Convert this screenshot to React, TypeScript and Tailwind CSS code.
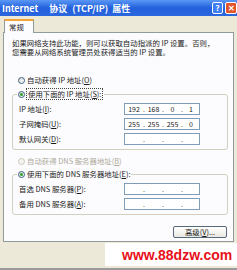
import React from "react";

const cjk = "font-['Noto_Sans_CJK_SC',sans-serif]";

function Radio({ checked, disabled }: { checked?: boolean; disabled?: boolean }) {
  return (
    <span
      className={`flex h-[7px] w-[7px] shrink-0 items-center justify-center rounded-full border ${
        disabled ? "border-[#cac8bb] bg-[#f4f3ee]" : "border-[#3b5f84] bg-linear-to-br from-[#d8d8d2] to-white"
      }`}
    >
      {checked && <span className="h-[3px] w-[3px] rounded-full bg-[#29a329]" />}
    </span>
  );
}

function IpBox({ parts }: { parts: string[] }) {
  const [a, b, c, d] = parts;
  return (
    <div className="grid h-[12px] w-[76px] grid-cols-[18px_2px_17px_2px_17px_2px_16px] items-center border border-[#7f9db9] bg-white text-[7px] leading-none text-[#222]">
      <span className="text-center">{a}</span>
      <span className="text-center text-[#555]">.</span>
      <span className="text-center">{b}</span>
      <span className="text-center text-[#555]">.</span>
      <span className="text-center">{c}</span>
      <span className="text-center text-[#555]">.</span>
      <span className="text-center">{d}</span>
    </div>
  );
}

function Field({ label, parts }: { label: React.ReactNode; parts: string[] }) {
  return (
    <div className="grid h-[12px] grid-cols-[105px_76px] items-center pl-[6px]">
      <span className="whitespace-nowrap">{label}</span>
      <IpBox parts={parts} />
    </div>
  );
}

export default function App() {
  return (
    <div className={`flex h-[270px] w-[237px] flex-col overflow-hidden bg-[#ece9d8] ${cjk} text-[7.4px] text-[#1a1a1a]`}>
      {/* title bar */}
      <div className="flex h-[16px] items-center bg-linear-to-b from-[#5a97f5] via-[#2260dc] to-[#2b67de] pl-[2px]">
        <span className="whitespace-nowrap text-[9px] font-bold leading-none text-white">
          Internet <span className="ml-[9px]">协议</span> <span className="ml-[3px]">(TCP/IP)</span>{" "}
          <span className="ml-[2px]">属性</span>
        </span>
        <div className="ml-auto flex items-center gap-[2px]">
          <div className="flex h-[12px] w-[11px] items-center justify-center rounded-[2px] border border-white bg-[#3f7ff2] text-[8px] font-bold leading-none text-white">
            ?
          </div>
          <div className="flex h-[12px] w-[12px] items-center justify-center rounded-[2px] border border-white bg-[#e2542c] text-[8px] font-bold leading-none text-white">
            ✕
          </div>
        </div>
      </div>

      {/* tab strip */}
      <div className="relative z-10 -mb-px mt-[3px] flex pl-[4px]">
        <div className="flex h-[14px] w-[30px] items-center border-x border-t-2 border-x-[#919b9c] border-t-[#f0a63a] bg-[#fcfcfe] pl-[4px] leading-none">
          常规
        </div>
      </div>

      {/* tab panel */}
      <div className="ml-[3px] flex h-[210px] w-[231px] flex-col border border-[#919b9c] bg-[#fcfcfe]">
        <div className="mt-[5px] whitespace-nowrap pl-[8px] leading-[9px]">
          <div>如果网络支持此功能，则可以获取自动指派的 IP 设置。否则，</div>
          <div>您需要从网络系统管理员处获得适当的 IP 设置。</div>
        </div>

        <div className="mt-[19px] flex h-[10px] items-center gap-[2px] whitespace-nowrap pl-[14px] leading-none">
          <Radio />
          <span>
            自动获得 IP 地址(<u>O</u>)
          </span>
        </div>

        <fieldset className="mt-[4px] ml-[8px] flex w-[216px] flex-col gap-[3px] rounded-[3px] border border-[#d0d0bf] pt-[4px] pb-[4px]">
          <legend className="ml-[4px] flex h-[10px] items-center gap-[1px] whitespace-nowrap bg-[#fcfcfe] px-[1px] leading-none">
            <Radio checked />
            <span className="border border-dotted border-[#444] px-[1px] py-[1px]">
              使用下面的 IP 地址(<u>S</u>):
            </span>
          </legend>
          <Field
            label={
              <>
                IP 地址(<u>I</u>):
              </>
            }
            parts={["192", "168", "0", "1"]}
          />
          <Field
            label={
              <>
                子网掩码(<u>U</u>):
              </>
            }
            parts={["255", "255", "255", "0"]}
          />
          <Field
            label={
              <>
                默认网关(<u>D</u>):
              </>
            }
            parts={["", "", "", ""]}
          />
        </fieldset>

        <div className="mt-[6px] flex h-[10px] items-center gap-[2px] whitespace-nowrap pl-[14px] leading-none text-[#aca899]">
          <Radio disabled />
          <span>
            自动获得 DNS 服务器地址(<u>B</u>)
          </span>
        </div>

        <fieldset className="mt-[3px] ml-[8px] flex w-[216px] flex-col gap-[3px] rounded-[3px] border border-[#d0d0bf] pt-[4px] pb-[4px]">
          <legend className="ml-[4px] flex h-[10px] items-center gap-[2px] whitespace-nowrap bg-[#fcfcfe] px-[1px] leading-none">
            <Radio checked />
            <span>
              使用下面的 DNS 服务器地址(<u>E</u>):
            </span>
          </legend>
          <Field
            label={
              <>
                首选 DNS 服务器(<u>P</u>):
              </>
            }
            parts={["", "", "", ""]}
          />
          <Field
            label={
              <>
                备用 DNS 服务器(<u>A</u>):
              </>
            }
            parts={["", "", "", ""]}
          />
        </fieldset>

        <div className="mt-[11px] mr-[6px] flex h-[12px] w-[54px] items-center justify-center self-end rounded-[2px] border border-[#56687c] bg-linear-to-b from-white to-[#e9e8e1] leading-none">
          高级(<u>V</u>)...
        </div>
      </div>

      {/* watermark */}
      <div className="mt-[1px] ml-[105px] flex h-[23px] w-[132px] items-center bg-white pl-[17px]">
        <span className="font-['Liberation_Sans',sans-serif] text-[14px] font-bold leading-none text-[#e8101a]">
          www.88dzw.com
        </span>
      </div>
      <div className="mt-auto h-[2px] bg-[#9a9a9a]" />
    </div>
  );
}
